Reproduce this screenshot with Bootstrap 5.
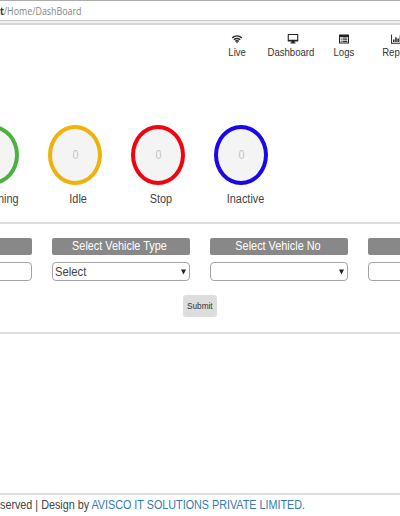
<!DOCTYPE html>
<html lang="en">
<head>
<meta charset="utf-8">
<title>DashBoard</title>
<link rel="stylesheet" href="https://cdn.jsdelivr.net/npm/bootstrap@5.3.0/dist/css/bootstrap.min.css">
<style>
body{width:400px;height:516px;font-family:"Liberation Sans",Arial,sans-serif;font-size:12.5px;line-height:16px;color:#444}
.sq{display:inline-block;white-space:nowrap;transform:scaleX(.87)}
.sq-left{transform-origin:0 50%}
.address{height:25px;border-top:1px solid #adadad;background:linear-gradient(#fff 19px,#c9c9c9 19px,#c9c9c9 20px,#f1f1f1 20px,#f1f1f1 22px,#d6d6d6 22px)}
.address .url{font-family:"Open Sans","Noto Sans",sans-serif;font-size:10.5px;line-height:20px;color:#858585;transform:scaleX(.845)}
.url b{color:#333}
.menu{height:100px;padding:8px 0 0 210px}
.menu-item{flex:none;width:54px;font-size:11px;line-height:12px;color:#333}
.menu-item:nth-child(3){width:52px}
.menu-item svg{width:12px;height:12px}
.menu-item:nth-child(2) svg{margin-left:3px}
.menu-item .sq{margin-top:1px}
.gauges{height:97px;margin-left:-49.5px}
.gauge{flex:none;width:83px}
.ring{width:54px;height:60px;border:4.3px solid;border-radius:50%;background:#f4f4f4}
.ring span{color:#c4c4c4}
.ring-green{border-color:#4bb23d}.ring-gold{border-color:#eeb20a}.ring-red{border-color:#f10311}.ring-blue{border-color:#1808ea}
.gauge-name{margin-top:6px;padding-left:6px}
.name-wide{padding-left:10px}
.name-run{padding-left:13px}
.rule{height:2px;background:#dedede}
.filters{height:108px;padding-top:14px}
.filter-row{gap:20px;margin-left:-106px}
.filter{flex:none;width:138px}
.filter-head{height:17px;line-height:17px;padding-right:3px;border-radius:2px;background:#888;color:#fff}
.pick{height:19px;margin-top:7px;padding:0 3px 0 2px;border:1px solid #a5a5a5;border-radius:4px;background:#fff}
.pick .sq{transform:scaleX(.9)}
.pick svg{width:5px;height:6px}
.submit{width:34px;height:22px;margin-top:14px;border-radius:3px;background:#ddd;color:#333;font-size:9.5px;line-height:21px}
.blank{height:159px}
.foot{height:21px;padding-top:2px}
.foot .sq{transform:scaleX(.862)}
.foot a{color:#337ab7}
</style>
<script src="https://cdn.jsdelivr.net/npm/bootstrap@5.3.0/dist/js/bootstrap.bundle.min.js"></script>
</head>
<body class="overflow-hidden bg-white">
<div class="address"><span class="sq sq-left url"><b>t</b>/Home/DashBoard</span></div>
<nav class="menu d-flex overflow-hidden">
<div class="menu-item d-flex flex-column align-items-center"><svg viewBox="0 0 12 12" fill="none" stroke="#222" stroke-width="1.4"><path d="M1.2 4.9Q6 .9 10.8 4.9M2.8 6.8Q6 4.2 9.2 6.8M4.3 8.4Q6 7 7.7 8.4"/><path d="M4.9 9.2h2.2L6 10.6z" fill="#222" stroke="none"/></svg><span class="sq">Live</span></div>
<div class="menu-item d-flex flex-column align-items-center"><svg viewBox="0 0 12 12"><path fill="#222" fill-rule="evenodd" d="M1.3 1h9.4q.6 0 .6.7v6.2q0 .7-.6.7H7.5v1h1v.9h-5v-.9h1v-1H1.3q-.6 0-.6-.7V1.7Q.7 1 1.3 1zM1.8 2v4.8h8.4V2z"/></svg><span class="sq">Dashboard</span></div>
<div class="menu-item d-flex flex-column align-items-center"><svg viewBox="0 0 12 12"><path fill="#222" fill-rule="evenodd" d="M1 1.5h10v9H1zM2 4v5.6h8V4z"/><path stroke="#222" d="M2.7 5h1m.8 0h4.8M2.7 6.8h1m.8 0h4.8M2.7 8.6h1m.8 0h4.8"/></svg><span class="sq">Logs</span></div>
<div class="menu-item d-flex flex-column align-items-center"><svg viewBox="0 0 12 12"><path fill="#222" d="M0 1.5h.9v8.2H12v1H0zM2 6.5h1.5V9H2zM4.2 4.2h1.5V9H4.2zM6.4 5.4h1.5V9H6.4zM8.6 2.5h1.5V9H8.6z"/></svg><span class="sq">Report</span></div>
</nav>
<section class="gauges d-flex">
<div class="gauge d-flex flex-column align-items-center"><div class="ring ring-green d-flex align-items-center justify-content-center"><span class="sq">0</span></div><div class="gauge-name name-run"><span class="sq">Running</span></div></div>
<div class="gauge d-flex flex-column align-items-center"><div class="ring ring-gold d-flex align-items-center justify-content-center"><span class="sq">0</span></div><div class="gauge-name"><span class="sq">Idle</span></div></div>
<div class="gauge d-flex flex-column align-items-center"><div class="ring ring-red d-flex align-items-center justify-content-center"><span class="sq">0</span></div><div class="gauge-name"><span class="sq">Stop</span></div></div>
<div class="gauge d-flex flex-column align-items-center"><div class="ring ring-blue d-flex align-items-center justify-content-center"><span class="sq">0</span></div><div class="gauge-name name-wide"><span class="sq">Inactive</span></div></div>
</section>
<div class="rule"></div>
<section class="filters">
<div class="filter-row d-flex">
<div class="filter"><div class="filter-head"></div><div class="pick"></div></div>
<div class="filter"><div class="filter-head text-center"><span class="sq">Select Vehicle Type</span></div><div class="pick d-flex align-items-center justify-content-between"><span class="sq sq-left">Select</span><svg viewBox="0 0 5 6"><path fill="#222" d="M0 .5h5L2.5 5.5z"/></svg></div></div>
<div class="filter"><div class="filter-head text-center"><span class="sq">Select Vehicle No</span></div><div class="pick d-flex align-items-center justify-content-end"><svg viewBox="0 0 5 6"><path fill="#222" d="M0 .5h5L2.5 5.5z"/></svg></div></div>
<div class="filter"><div class="filter-head"></div><div class="pick"></div></div>
</div>
<button class="submit border-0 p-0 d-flex justify-content-center mx-auto"><span class="sq">Submit</span></button>
</section>
<div class="rule"></div>
<main class="blank"></main>
<div class="rule"></div>
<footer class="foot d-flex"><span class="sq sq-left">served | Design by <a class="text-decoration-none" href="#">AVISCO IT SOLUTIONS PRIVATE LIMITED.</a></span></footer>
</body>
</html>
